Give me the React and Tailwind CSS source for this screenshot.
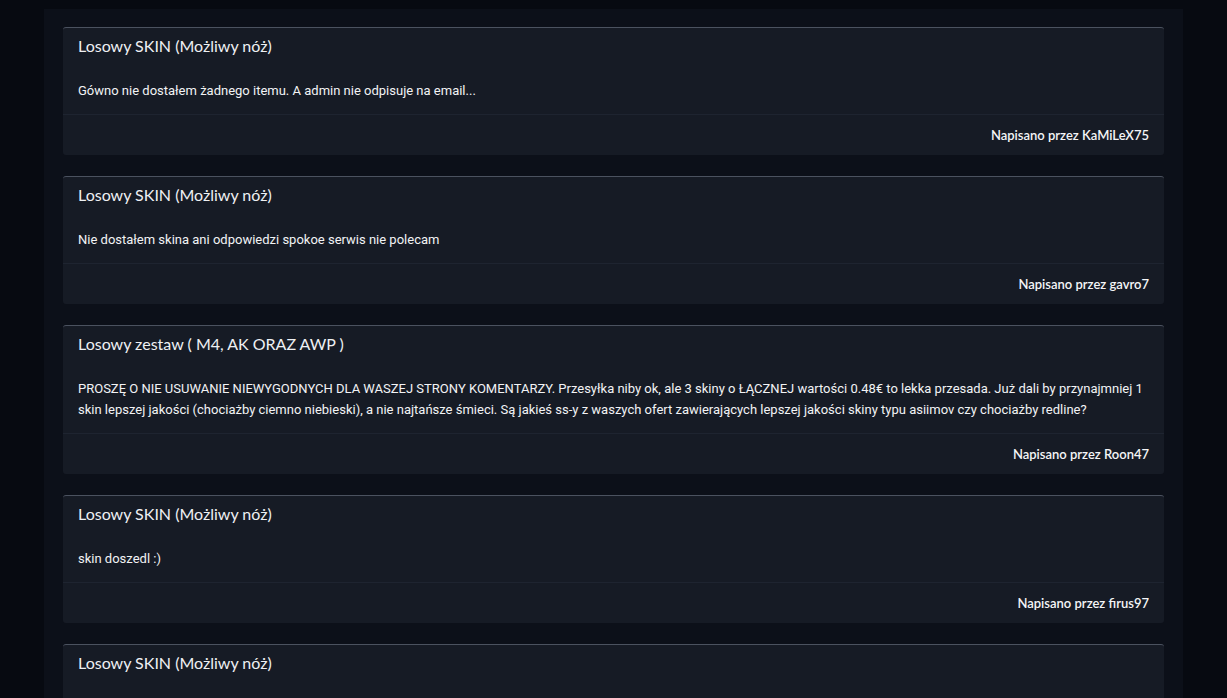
import React from 'react';

const reviews = [
  {
    title: 'Losowy SKIN (Możliwy nóż)',
    body: 'Gówno nie dostałem żadnego itemu. A admin nie odpisuje na email...',
    author: 'KaMiLeX75',
  },
  {
    title: 'Losowy SKIN (Możliwy nóż)',
    body: 'Nie dostałem skina ani odpowiedzi spokoe serwis nie polecam',
    author: 'gavro7',
  },
  {
    title: 'Losowy zestaw ( M4, AK ORAZ AWP )',
    body: 'PROSZĘ O NIE USUWANIE NIEWYGODNYCH DLA WASZEJ STRONY KOMENTARZY. Przesyłka niby ok, ale 3 skiny o ŁĄCZNEJ wartości 0.48€ to lekka przesada. Już dali by przynajmniej 1 skin lepszej jakości (chociażby ciemno niebieski), a nie najtańsze śmieci. Są jakieś ss-y z waszych ofert zawierających lepszej jakości skiny typu asiimov czy chociażby redline?',
    author: 'Roon47',
  },
  {
    title: 'Losowy SKIN (Możliwy nóż)',
    body: 'skin doszedl :)',
    author: 'firus97',
  },
  {
    title: 'Losowy SKIN (Możliwy nóż)',
    body: 'Dostałem skina, polecam',
    author: 'mateo',
  },
];

const ReviewCard = ({ review: { title, body, author } }) => (
  <div className="bg-[#161b25] border-t border-[#4b525f] rounded-[3px]">
    {/* header */}
    <div className="px-[15px] pt-[8px] pb-[11px]">
      <h3 className="font-['Lato',sans-serif] text-[16px] leading-[20px] text-[#eef0f3]">{title}</h3>
    </div>

    {/* body */}
    <div className="px-[15px] pt-[13px] pb-[13px]">
      <p className="font-['Roboto',sans-serif] text-[13px] leading-[21px] text-[#f2f3f5]">{body}</p>
    </div>

    {/* footer */}
    <div className="border-t border-[#1e2430] px-[15px] py-[10px] flex justify-end">
      <span className="font-['Lato',sans-serif] text-[13px] leading-[20px] font-semibold text-[#f4f5f7]">
        Napisano przez {author}
      </span>
    </div>
  </div>
);

export default function App() {
  return (
    <div className="h-screen overflow-hidden bg-[#070a11] pt-[9px] font-['Lato',sans-serif]">
      <div className="mx-auto w-[1139px] bg-[#0c1019] px-[19px] pt-[18px] pb-[20px] min-h-full">
        <div className="flex flex-col gap-[21px]">
          {reviews.map((review, i) => (
            <ReviewCard key={i} review={review} />
          ))}
        </div>
      </div>
    </div>
  );
}
